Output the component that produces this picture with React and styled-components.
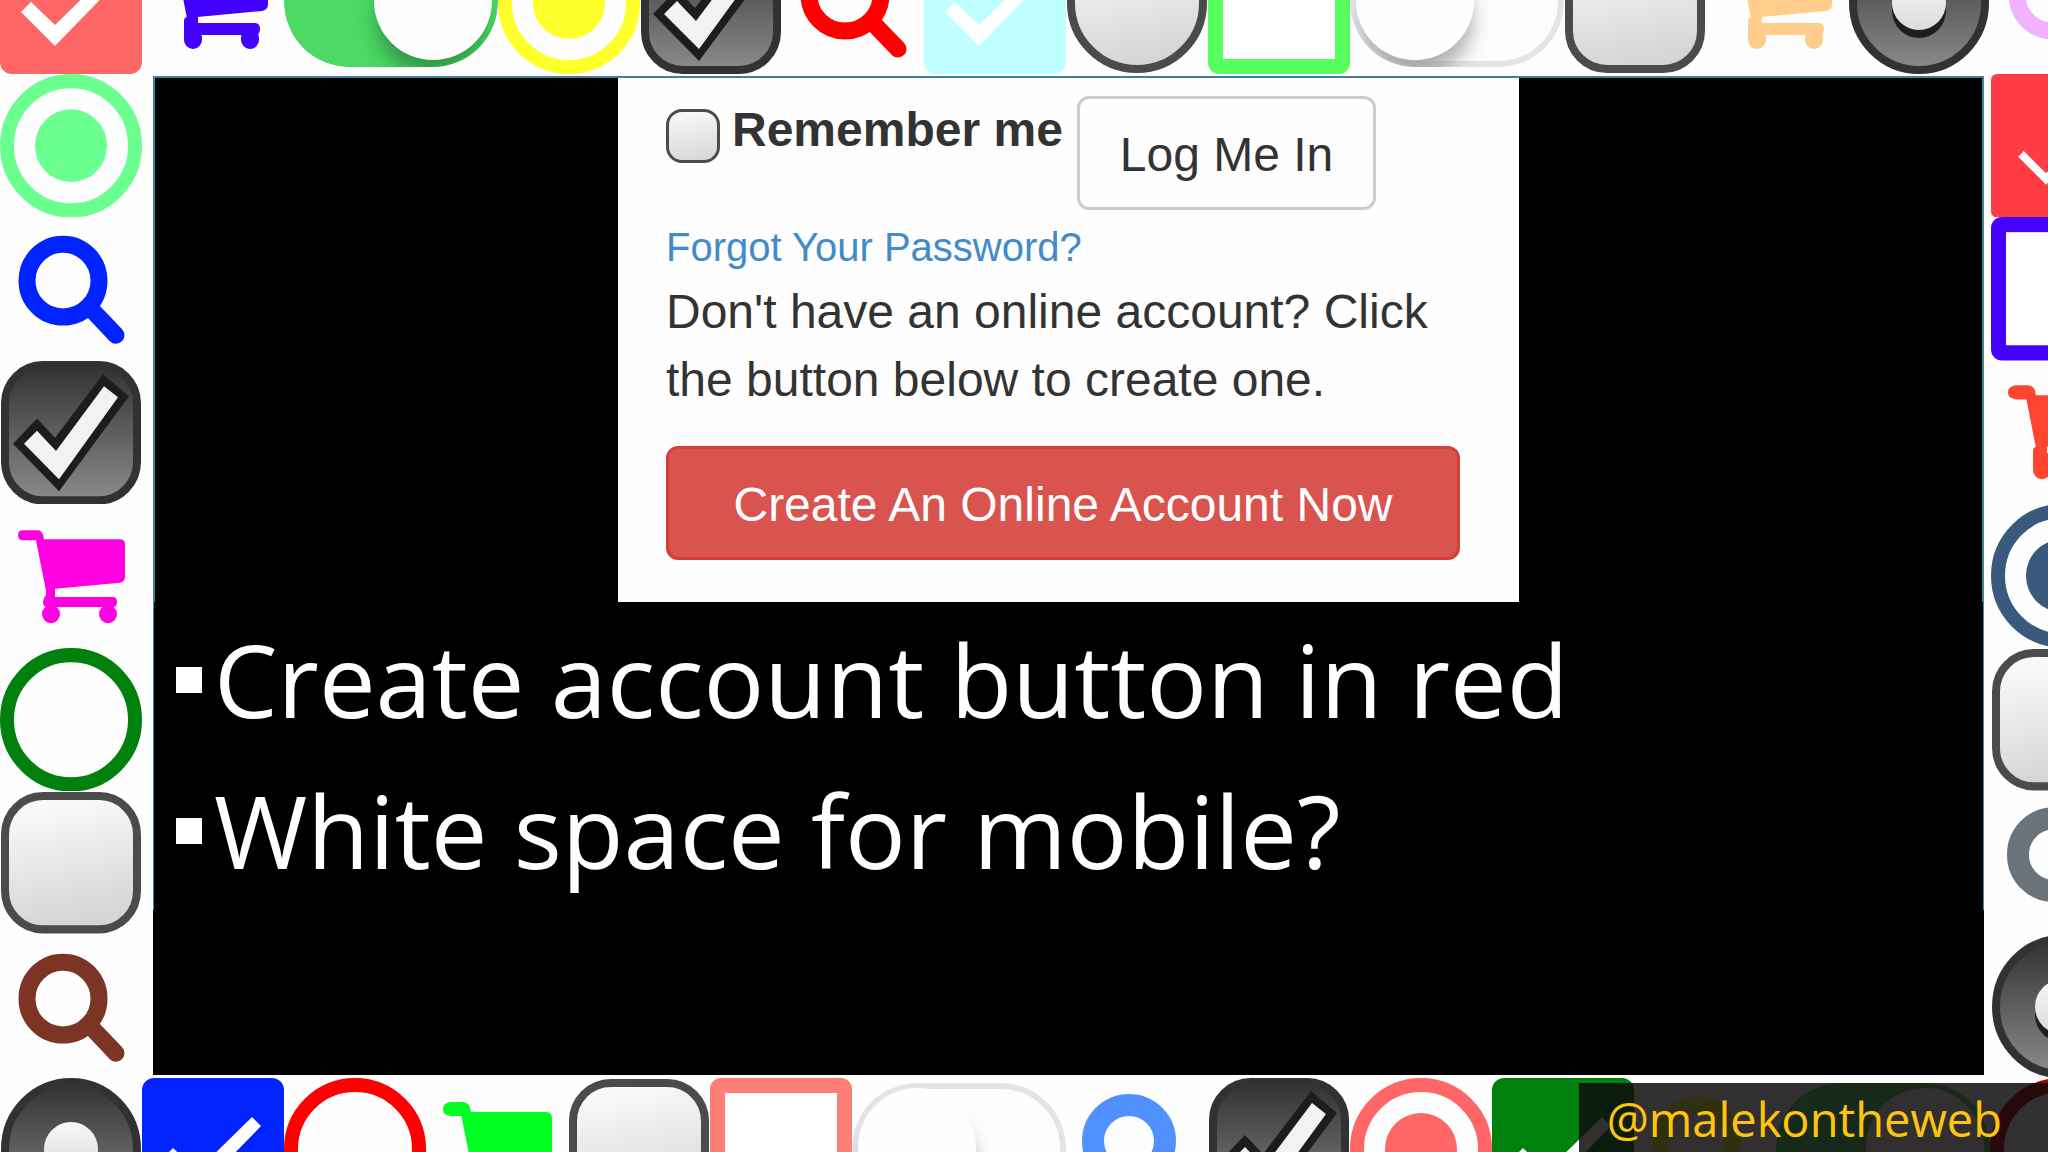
import React, { useId } from 'react';
import styled, { createGlobalStyle } from 'styled-components';

const GlobalStyle = createGlobalStyle`
  * {
    box-sizing: border-box;
  }
  body {
    margin: 0;
    background-color: #fefefe;
    font-family: "Liberation Sans", Arial, sans-serif;
  }
`;

const Page = styled.div`
  position: relative;
  display: grid;
  grid-template-columns: 142px 1fr 57px;
  grid-template-rows: 74px 1fr 74px;
  width: 100%;
  height: 100vh;
  overflow: hidden;
  background-color: #fefefe;
`;

const Strip = styled.div`
  grid-column: 1 / -1;
  display: flex;
  align-items: ${({ $edge }) => ($edge === 'top' ? 'flex-end' : 'flex-start')};
  min-width: 0;
`;

const Rail = styled.div`
  display: flex;
  flex-direction: column;
  min-height: 0;
  overflow: hidden;
`;

const Tile = styled.svg`
  display: block;
  flex: none;
  width: ${({ $wide }) => ($wide ? '214px' : '142px')};
  height: 142px;

  ${Rail} & {
    flex: 1 1 0;
    height: auto;
    min-height: 0;
  }
`;

const Slide = styled.main`
  display: flex;
  flex-direction: column;
  margin: 2px 7px 3px 11px;
  background-color: #000000;
`;

const Shot = styled.section`
  display: flex;
  justify-content: center;
  border: 2px solid #3d819b;
  border-bottom: none;
`;

const Card = styled.form`
  width: 901px;
  max-width: 100%;
  padding: 18px 59px 42px 48px;
  background-color: #fefefe;
  color: #333333;
`;

const LoginRow = styled.div`
  display: flex;
  align-items: flex-start;
`;

const Checkbox = styled.input`
  appearance: none;
  flex: none;
  width: 54px;
  height: 54px;
  margin: 13px 12px 0 0;
  border: 3px solid #4c4c4c;
  border-radius: 16px;
  background: linear-gradient(170deg, #fafafa, #d6d6d6);
`;

const RememberLabel = styled.label`
  margin-right: 14px;
  font-size: 48px;
  font-weight: bold;
  line-height: 68px;
  white-space: nowrap;
`;

const Button = styled.button`
  height: 114px;
  border: 3px solid ${({ $danger }) => ($danger ? '#d43f3a' : '#cccccc')};
  border-radius: 12px;
  background-color: ${({ $danger }) => ($danger ? '#d9534f' : '#fefefe')};
  color: ${({ $danger }) => ($danger ? '#ffffff' : '#333333')};
  width: ${({ $danger }) => ($danger ? '100%' : 'auto')};
  padding: 2px 40px 0;
  font-family: inherit;
  font-size: 48px;
  white-space: nowrap;
`;

const ForgotLink = styled.a`
  display: block;
  margin-top: 6px;
  color: #428bca;
  font-size: 40px;
  line-height: 62px;
  text-decoration: none;
`;

const Hint = styled.p`
  margin: 0 0 32px;
  font-size: 48px;
  line-height: 68px;
`;

const Points = styled.ul`
  height: 308px;
  margin: 0;
  padding: 2px 0 0 22px;
  border: 1px solid #3f8ba5;
  border-width: 0 1px;
  list-style: none;
  font-family: "Open Sans", "Noto Sans", sans-serif;
  font-size: 101px;
  line-height: 151px;
  color: #ffffff;
`;

const Point = styled.li`
  display: flex;
  align-items: center;
  white-space: nowrap;

  &::before {
    content: "";
    width: 26px;
    height: 26px;
    margin-right: 12px;
    background-color: #ffffff;
  }
`;

const Handle = styled.div`
  position: absolute;
  right: 0;
  bottom: 0;
  height: 69px;
  padding: 0 46px 0 28px;
  background-color: rgba(14, 11, 13, 0.85);
  color: #ffc40d;
  font-family: "Open Sans", "Noto Sans", sans-serif;
  font-size: 47px;
  line-height: 72px;
`;

const Icon = ({ wide, children }) => (
  <Tile
    $wide={wide}
    viewBox={wide ? '0 0 214 142' : '0 0 142 142'}
    preserveAspectRatio="none"
    aria-hidden="true"
  >
    {children}
  </Tile>
);

const CheckTile = ({ color, thin }) => (
  <Icon>
    <rect width="142" height="142" rx={thin ? 6 : 12} fill={color} />
    {thin ? (
      <path d="M30 79 L55 104 L112 47" fill="none" stroke="#fff" strokeWidth="8" />
    ) : (
      <path d="M21 80 L31 70 L55 93 L110 39 L119 48 L55 114 Z" fill="#fff" />
    )}
  </Icon>
);

const Radio = ({ color, checked }) => (
  <Icon>
    <circle cx="71" cy="71" r="64" fill="none" stroke={color} strokeWidth="14" />
    {checked && <circle cx="71" cy="71" r="36" fill={color} />}
  </Icon>
);

const Square = ({ color }) => (
  <Icon>
    <rect width="142" height="142" rx="11" fill={color} />
    <rect x="15" y="15" width="112" height="112" fill="#fff" />
  </Icon>
);

const Search = ({ color, bold }) => (
  <Icon>
    <circle
      cx="63"
      cy="63"
      r="36"
      fill="none"
      stroke={color}
      strokeWidth={bold ? 22 : 17}
    />
    <path d="M90 90 L116 117" stroke={color} strokeWidth={bold ? 24 : 17} strokeLinecap="round" />
  </Icon>
);

const Cart = ({ color, bold }) => (
  <Icon>
    <g fill={color} stroke={color} strokeWidth={bold ? 2 : 0} strokeLinejoin="round">
      <path d="M23 26 H38 Q43 26 44 35 H120 Q125 35 125 40 V72 Q125 77 120 78 L55 84 V92 H113 Q117 92 117 97 Q117 102 113 102 H47 Q43 102 43 97 Q43 93 46 90 V86 L36 36 H23 Q18 36 18 31 Q18 26 23 26 Z" />
      {bold ? (
        <>
          <rect x="19" y="25" width="24" height="12" rx="6" />
          <rect x="43" y="86" width="12" height="20" rx="3" />
          <rect x="43" y="98" width="16" height="18" rx="8" />
          <rect x="100" y="98" width="16" height="18" rx="8" />
        </>
      ) : (
        <>
          <circle cx="51" cy="109" r="9" />
          <circle cx="108" cy="109" r="9" />
        </>
      )}
    </g>
  </Icon>
);

const LightBox = ({ round }) => {
  const id = useId();
  return (
    <Icon>
      <linearGradient id={id} x1="0" y1="0" x2="0.2" y2="1">
        <stop offset="0.1" stopColor="#fbfafb" />
        <stop offset="1" stopColor="#d6d4d6" />
      </linearGradient>
      <rect
        x="5"
        y="5"
        width="132"
        height="132"
        rx={round ? 66 : 38}
        fill={`url(#${id})`}
        stroke="#4c4b4c"
        strokeWidth="8"
      />
    </Icon>
  );
};

const DarkFace = ({ round }) => {
  const id = useId();
  return (
    <>
      <linearGradient id={id} x1="0" y1="0" x2="0" y2="1">
        <stop offset="0.05" stopColor="#373637" />
        <stop offset="1" stopColor="#8c8b8c" />
      </linearGradient>
      <rect
        x="5"
        y="4"
        width="132"
        height="134"
        rx={round ? 67 : 38}
        fill={`url(#${id})`}
        stroke="#333233"
        strokeWidth="8"
      />
    </>
  );
};

const DarkCheck = () => (
  <Icon>
    <DarkFace />
    <path d="M13 82 L37 57 L55 76 L103 13 L129 35 L59 129 Z" fill="#1d1d1d" />
    <path d="M24 82 L37 69 L56 89 L104 25 L118 36 L59 117 Z" fill="#f3f2f3" />
  </Icon>
);

const DarkRadio = () => {
  const id = useId();
  return (
    <Icon>
      <linearGradient id={id} x1="0" y1="0" x2="0" y2="1">
        <stop offset="0" stopColor="#f8f7f8" />
        <stop offset="1" stopColor="#dddbdc" />
      </linearGradient>
      <DarkFace round />
      <circle cx="71" cy="79" r="27" fill="#1f1e1f" />
      <circle cx="71" cy="71" r="27" fill={`url(#${id})`} />
    </Icon>
  );
};

const Toggle = ({ on }) => {
  const id = useId();
  const knob = on ? 149 : 65;
  return (
    <Icon wide>
      <clipPath id={`${id}c`}>
        <rect x="0" y="5" width="214" height="130" rx="65" />
      </clipPath>
      <filter id={`${id}b`} x="-50%" y="-50%" width="200%" height="200%">
        <feGaussianBlur stdDeviation="10" />
      </filter>
      <g clipPath={`url(#${id}c)`}>
        <rect x="0" y="5" width="214" height="130" rx="65" fill={on ? '#4cd964' : '#e4e4e5'} />
        {!on && <rect x="6" y="11" width="202" height="118" rx="59" fill="#fdfdfe" />}
        <circle
          cx={on ? knob - 2 : knob + 3}
          cy="88"
          r="54"
          fill={on ? '#1d6b2e' : '#777777'}
          opacity="0.6"
          filter={`url(#${id}b)`}
        />
      </g>
      <circle cx={knob} cy="69" r="59" fill="#fefefe" />
    </Icon>
  );
};

const App = () => (
  <>
    <GlobalStyle />
    <Page>
      <Strip $edge="top">
        <CheckTile color="#ff6666" />
        <Cart color="#4400ff" bold />
        <Toggle on />
        <Radio color="#ffff2b" checked />
        <DarkCheck />
        <Search color="#ff0000" />
        <CheckTile color="#c0ffff" />
        <LightBox round />
        <Square color="#57ff5e" />
        <Toggle />
        <LightBox />
        <Cart color="#ffce8c" bold />
        <DarkRadio />
        <Search color="#f3b2ff" />
      </Strip>

      <Rail>
        <Radio color="#6bff90" checked />
        <Search color="#0023ff" />
        <DarkCheck />
        <Cart color="#ff00e1" />
        <Radio color="#00800d" />
        <LightBox />
        <Search color="#7c3524" />
      </Rail>

      <Slide>
        <Shot>
          <Card onSubmit={(e) => e.preventDefault()}>
            <LoginRow>
              <Checkbox type="checkbox" id="remember" />
              <RememberLabel htmlFor="remember">Remember me</RememberLabel>
              <Button type="submit">Log Me In</Button>
            </LoginRow>
            <ForgotLink href="#forgot">Forgot Your Password?</ForgotLink>
            <Hint>Don't have an online account? Click the button below to create one.</Hint>
            <Button type="button" $danger>Create An Online Account Now</Button>
          </Card>
        </Shot>
        <Points>
          <Point>Create account button in red</Point>
          <Point>White space for mobile?</Point>
        </Points>
      </Slide>

      <Rail>
        <CheckTile color="#ff3b44" thin />
        <Square color="#4600ff" />
        <Cart color="#ff442f" bold />
        <Radio color="#395a7c" checked />
        <LightBox />
        <Search color="#6c747b" bold />
        <DarkRadio />
      </Rail>

      <Strip $edge="bottom">
        <DarkRadio />
        <CheckTile color="#0023ff" />
        <Radio color="#ff0000" />
        <Cart color="#00ff22" bold />
        <LightBox />
        <Square color="#ff7f78" />
        <Toggle />
        <Search color="#5191ff" bold />
        <DarkCheck />
        <Radio color="#ff6668" checked />
        <CheckTile color="#00800d" />
        <Search color="#ffff2b" />
        <Toggle on />
        <Radio color="#a80000" />
      </Strip>

      <Handle>@malekontheweb</Handle>
    </Page>
  </>
);

export default App;
